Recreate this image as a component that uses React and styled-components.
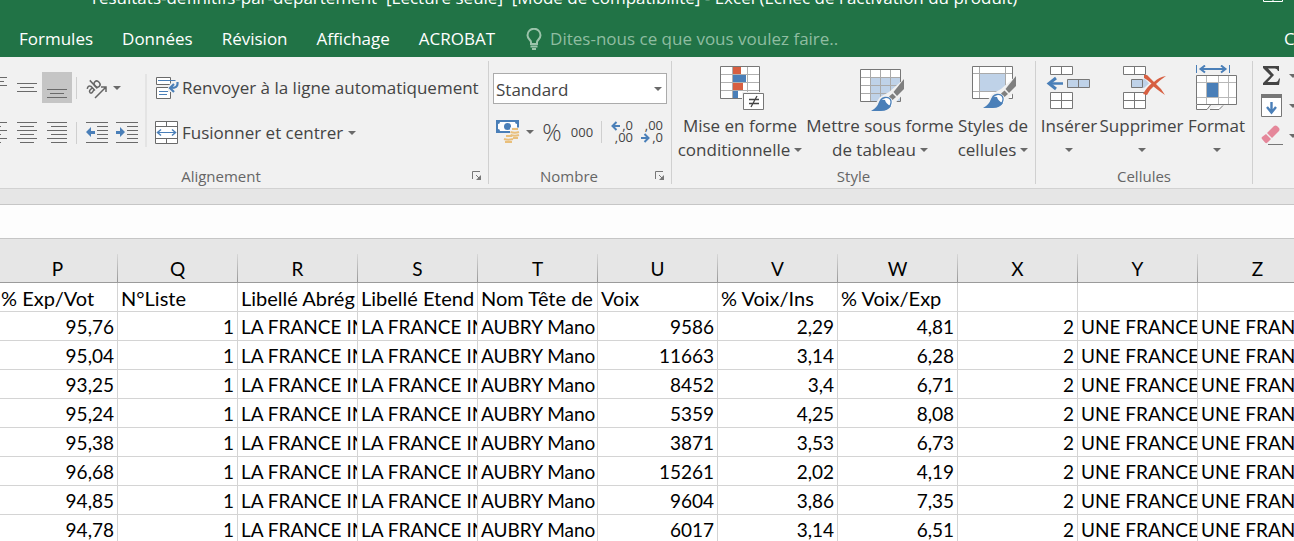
import React from "react";
import styled, { createGlobalStyle } from "styled-components";

const uiFont = '"Open Sans", "Noto Sans", sans-serif';
const ink = "#444";
const line = "#6a6a6a";
const blue = "#4a7fb8";
const paleBlue = "#bfd2e8";
const red = "#d75f41";

const GlobalStyle = createGlobalStyle`
  * { box-sizing: border-box; }
  body { margin: 0; background: #fff; font-family: ${uiFont}; overflow: hidden; }
  button, input, select { font: inherit; color: inherit; margin: 0; }
  svg { display: block; flex: none; }
`;

const Page = styled.div`
  display: flex;
  flex-direction: column;
  overflow: hidden;
`;

const Header = styled.header`
  background: #217346;
  color: #fff;
`;

const TitleBar = styled.div`
  display: flex;
  justify-content: space-between;
  align-items: flex-end;
  height: 20px;
  margin-top: -12px;
  padding: 0 11px 0 92px;
`;

const Title = styled.h1`
  margin: 0;
  font-size: 17px;
  line-height: 20px;
  font-weight: 400;
  white-space: pre;
`;

const Tabs = styled.nav`
  display: flex;
  align-items: center;
  gap: 29px;
  height: 49px;
  padding: 13px 0 0 19px;
`;

const Tab = styled.a`
  color: #fff;
  font-size: 17px;
  line-height: 24px;
  text-decoration: none;
  white-space: nowrap;
`;

const AccountTab = styled(Tab)`
  flex: 0 0 10px;
  overflow: hidden;
`;

const TellMe = styled.label`
  display: flex;
  align-items: center;
  gap: 8px;
  flex: 1;
  padding-left: 2px;
  color: #9cc4ab;
`;

const TellMeInput = styled.input`
  flex: 1;
  min-width: 0;
  padding: 0;
  border: 0;
  outline: 0;
  background: transparent;
  font-size: 17px;
  line-height: 24px;
  &::placeholder { color: #8fbda1; opacity: 1; }
`;

const Ribbon = styled.div`
  display: flex;
  padding: 4px 0;
  background: #f1f1f1;
  border-bottom: 1px solid #d2d2d2;
  color: ${ink};
`;

const Group = styled.section`
  display: flex;
  flex-direction: column;
  flex: none;
  width: ${(p) => p.$width}px;
  margin-left: ${(p) => p.$cut || 0}px;
  border-right: 1px solid #d0d0d0;
`;

const GroupBody = styled.div`
  display: flex;
  height: 107px;
  padding: ${(p) => p.$pad};
`;

const GroupFooter = styled.div`
  display: flex;
  align-items: center;
  height: 16px;
`;

const GroupName = styled.h2`
  flex: 1;
  margin: 0;
  text-align: center;
  font-size: 15px;
  line-height: 16px;
  font-weight: 400;
  color: #666;
`;

const Stack = styled.div`
  display: flex;
  flex-direction: column;
  gap: ${(p) => p.$gap || 0}px;
`;

const Row = styled.div`
  display: flex;
  align-items: center;
  height: ${(p) => p.$height || 31}px;
`;

const ToolButton = styled.button`
  display: flex;
  align-items: center;
  justify-content: center;
  gap: 6px;
  flex: none;
  width: ${(p) => p.$width || 30}px;
  height: 100%;
  padding: 0;
  border: 0;
  background: ${(p) => (p.$active ? "#c5c5c5" : "transparent")};
  font-size: ${(p) => p.$size || 17}px;
  font-weight: ${(p) => (p.$light ? 300 : 400)};
  line-height: 24px;
`;

const WideButton = styled(ToolButton)`
  justify-content: flex-start;
  gap: 3px;
  width: auto;
  white-space: nowrap;
`;

const LaunchButton = styled(ToolButton)`
  width: 22px;
`;

const Divider = styled.span`
  flex: none;
  width: 1px;
  height: 22px;
  margin: 0 5px 0 4px;
  background: #cfcfcf;
`;

const TallDivider = styled.span`
  flex: none;
  width: 2px;
  height: 73px;
  margin: 2px 8px 0 3px;
  background: #e4e4e4;
`;

const MenuMark = styled.span`
  display: flex;
  margin-left: ${(p) => p.$gap || 0}px;
`;

const FormatBox = styled.div`
  display: grid;
  align-items: center;
  width: 174px;
  height: 31px;
  border: 1px solid #ababab;
  background: #fff;
  & > * { grid-area: 1 / 1; }
  & > svg { justify-self: end; margin-right: 4px; pointer-events: none; }
`;

const FormatSelect = styled.select`
  appearance: none;
  width: 100%;
  height: 100%;
  padding: 1px 20px 0 2px;
  border: 0;
  background: transparent;
  font-size: 17px;
`;

const BigButton = styled.button`
  display: flex;
  flex-direction: column;
  align-items: center;
  flex: none;
  width: ${(p) => p.$width}px;
  padding: 0;
  border: 0;
  background: transparent;
  font-size: 17px;
  line-height: 24px;
  white-space: nowrap;
  & > svg { margin-bottom: 1px; }
`;

const BigLine = styled.span`
  display: flex;
  align-items: center;
  justify-content: center;
  gap: 4px;
  height: 24px;
`;

const FormulaArea = styled.div`
  padding-top: 15px;
  background: #e6e6e6;
`;

const FormulaInput = styled.input`
  display: block;
  width: 100%;
  height: 35px;
  padding: 0 8px;
  border: solid #c6c6c6;
  border-width: 1px 0;
  background: #fdfdfd;
  outline: 0;
`;

const Sheet = styled.table`
  width: 1320px;
  margin-left: -2px;
  table-layout: fixed;
  border-collapse: separate;
  border-spacing: 0;
  font-family: Lato, Carlito, sans-serif;
  font-size: 19px;
  color: #000;
`;

const ColumnHead = styled.th`
  height: 44px;
  padding: 16px 1px 0 0;
  border-bottom: 1px solid #9b9b9b;
  background: linear-gradient(#d8d8d8, #979797) right bottom / 1px 28px no-repeat #e6e6e6;
  font-weight: 400;
  line-height: 27px;
`;

const Cell = styled.td`
  height: 29px;
  padding: 2px 3px 0;
  border: solid #d4d4d4;
  border-width: 0 1px 1px 0;
  line-height: 26px;
  text-align: ${(p) => (p.$number ? "right" : "left")};
  white-space: nowrap;
  overflow: hidden;
`;

const HeadingCell = styled(Cell)`
  font-size: 20px;
`;

const Arrow = () => (
  <svg width="8" height="4" viewBox="0 0 8 4" aria-hidden="true">
    <path d="M0 0H8L4 4Z" fill="#6a6a6a" />
  </svg>
);

/* Horizontal text lines: [x, y, length] on a 22px square. */
const Lines = ({ rows, children }) => (
  <svg width="22" height="22" viewBox="0 0 22 22" shapeRendering="crispEdges" aria-hidden="true">
    {rows.map(([x, y, w]) => (
      <rect key={y} x={x} y={y} width={w} height="1" fill={line} />
    ))}
    {children}
  </svg>
);

const vertical = (y) => [[1, y, 20], [4, y + 4, 14], [1, y + 8, 20]];
const six = (x, w) => [0, 4, 8, 12, 16, 20].map((y, i) => (i % 2 ? [x, y, w] : [1, y, 20]));
const indent = [[0, 0, 22], [11, 4, 11], [11, 8, 11], [11, 12, 11], [11, 16, 11], [0, 20, 22]];

const BulbIcon = () => (
  <svg width="16" height="23" viewBox="0 0 16 23" fill="none" stroke="currentColor" aria-hidden="true">
    <path d="M5 16V14C5 12 1.500 11 1.500 7.200A6.300 6.300 0 0 1 14.500 7.200C14.500 11 11 12 11 14V16Z" strokeWidth="2" />
    <path d="M4.500 18.500H11.500M6 21H10" strokeWidth="2" />
  </svg>
);

const WindowIcon = () => (
  <svg width="20" height="14" viewBox="0 0 20 14" fill="none" stroke="#fff" aria-hidden="true">
    <path d="M.5.5H19.500V7.500H.5ZM10 1V7" />
  </svg>
);

const OrientationIcon = () => (
  <svg width="22" height="22" viewBox="0 0 22 22" fill="none" stroke="#666" strokeWidth="1.500" aria-hidden="true">
    <g transform="translate(8 10) rotate(-43)">
      <path d="M-5.500-2.500Q-2.500-5-1-1.800V4M-1 .3Q-6-.5-6 2Q-5.500 4.500-1 2.500" />
      <path d="M2.200-7V4" />
      <ellipse cx="5" cy=".6" rx="2.700" ry="3.200" />
    </g>
    <path d="M10 21L20.500 10.500M16 10H21V15" />
  </svg>
);

const WrapIcon = () => (
  <svg width="24" height="24" viewBox="0 0 24 24" fill="none" aria-hidden="true">
    <path d="M1.500 1.500H15.500V8.500H1.500ZM1.500 11.500H15.500V22.500H1.500Z" fill="#fff" stroke={line} />
    <path d="M16.500 6H24V16H13V11Z" fill="#f1f1f1" />
    <path d="M3 4.500H20.500M4 15.500H13M4 18.500H12" stroke={blue} />
    <path d="M22.500 6V8Q22.500 12 16 12M19 8L15 12L19 16" stroke={blue} strokeWidth="2.200" />
  </svg>
);

const MergeIcon = () => (
  <svg width="24" height="24" viewBox="0 0 24 24" fill="none" aria-hidden="true">
    <path d="M.5.5H22.500V22.500H.5Z" fill="#fff" stroke={line} />
    <path d="M0 5.500H23M0 17.500H23M11.500 0V5M11.500 18V23" stroke={line} />
    <path d="M3 11.500H20" stroke={blue} />
    <path d="M6 8.500L2.500 11.500L6 14.500M17 8.500L20.500 11.500L17 14.500" stroke={blue} strokeWidth="1.500" />
  </svg>
);

const MoneyIcon = () => (
  <svg width="24" height="24" viewBox="0 0 24 24" aria-hidden="true">
    <path d="M0 0H23V13H0Z" fill={blue} />
    <path d="M4 2H19Q19 4 21 4V9Q19 9 19 11H4Q4 9 2 9V4Q4 4 4 2Z" fill="#fff" />
    <circle cx="11.500" cy="6.500" r="3.500" fill={blue} />
    <path d="M14 7.500H24V19H18V23H7V14.500H14Z" fill="#f1f1f1" />
    <g fill="none" stroke="#e9bf7b" strokeWidth="2">
      <path d="M16 9H22M14.500 12Q19 13.500 23 12M14.500 15Q19 16.500 23 15M17 18H22" />
      <path d="M10 16H16M8 19Q12 20.500 17 19M9 22H16" />
    </g>
  </svg>
);

const DecimalArt = styled.svg`
  font-family: ${uiFont};
  font-size: 13px;
  fill: ${ink};
`;

const MoreDecimals = () => (
  <DecimalArt width="24" height="26" viewBox="0 0 24 26" aria-hidden="true">
    <path d="M10 7H3M6.500 3L2.500 7L6.500 11" fill="none" stroke={blue} strokeWidth="2" />
    <text x="23" y="11" textAnchor="end">,0</text>
    <text x="23" y="23" textAnchor="end">,00</text>
  </DecimalArt>
);

const FewerDecimals = () => (
  <DecimalArt width="24" height="26" viewBox="0 0 24 26" aria-hidden="true">
    <path d="M1 19H8M4.500 15L8.500 19L4.500 23" fill="none" stroke={blue} strokeWidth="2" />
    <text x="23" y="11" textAnchor="end">,00</text>
    <text x="23" y="23" textAnchor="end">,0</text>
  </DecimalArt>
);

const LaunchIcon = () => (
  <svg width="10" height="10" viewBox="0 0 10 10" fill="none" stroke="#777" aria-hidden="true">
    <path d="M.5 8V.5H8" />
    <path d="M4 4L8 8" />
    <path d="M9 4V9H4Z" fill="#777" stroke="none" />
  </svg>
);

const BigArt = ({ children }) => (
  <svg width="48" height="48" viewBox="0 0 48 48" fill="none" aria-hidden="true">{children}</svg>
);

const ConditionalIcon = () => (
  <BigArt>
    <path d="M4.500 1.500H43.500V33.500H4.500Z" fill="#fff" />
    <path d="M17 2H25V9H17ZM17 18H27V25H17Z" fill={red} />
    <path d="M17 10H30V17H17ZM17 26H22V33H17Z" fill={blue} />
    <path d="M5 9.500H43M5 17.500H43M5 25.500H43M16.500 2V33M31.500 2V33" stroke="#b0b0b0" />
    <path d="M4.500 1.500H43.500V33.500H4.500Z" stroke="#777" />
    <path d="M26 27H48V46H26Z" fill="#f1f1f1" />
    <path d="M27.500 28.500H47.500V44.500H27.500Z" fill="#fff" stroke="#777" />
    <path d="M33 34.500H43M33 38.500H43M41 31L35 42" stroke="#444" strokeWidth="1.300" />
  </BigArt>
);

const Brush = ({ x, y }) => (
  <g transform={`translate(${x} ${y})`}>
    <path d="M34-1L18 13L9 18L-2 34L20 33L26 22L34 13Z" fill="#f1f1f1" />
    <path d="M33 0V10L26 17L22.500 13Z" fill="#7f7f7f" />
    <path d="M21.500 14.500L25 18L21.500 21L18 17.500Z" fill="#7f7f7f" />
    <circle cx="15.500" cy="23.500" r="6" fill="#fff" />
    <path d="M0 32Q6 29 8 23Q10 20 14 21Q15 25 20 27Q17 32 10 32Z" fill={blue} />
    <path d="M8.500 25Q9 19.500 14 18.500Q19 18 20 22Q20.500 26 17 29" stroke={blue} strokeWidth="1.300" />
  </g>
);

const TableIcon = () => (
  <BigArt>
    <path d="M4.500 4.500H44.500V36.500H4.500Z" fill="#fff" />
    <path d="M15 13H44V36H15Z" fill={paleBlue} />
    <path d="M14.500 5V36M24.500 5V36M34.500 5V36M5 12.500H44M5 20.500H44M5 28.500H44" stroke="#aaa" />
    <path d="M4.500 4.500H44.500V36.500H4.500Z" stroke="#777" />
    <Brush x={15} y={14} />
  </BigArt>
);

const StylesIcon = () => (
  <BigArt>
    <path d="M3.500 1.500H43.500V33.500H3.500Z" fill="#fff" />
    <path d="M11 9H36V26H11Z" fill={paleBlue} />
    <path d="M10.500 2V33M36.500 2V33M4 8.500H43M4 26.500H43" stroke="#aaa" />
    <path d="M3.500 1.500H43.500V33.500H3.500Z" stroke="#777" />
    <Brush x={14} y={11} />
  </BigArt>
);

const InsertIcon = () => (
  <BigArt>
    <path d="M5.500 1.500H27.500V9.500H5.500ZM16.500 2V9M5.500 27.500H27.500V43.500H5.500ZM16.500 28V43M6 35.500H27" fill="#fff" stroke="#777" />
    <path d="M22.500 14.500H44.500V22.500H22.500ZM33.500 15V22" fill={paleBlue} stroke="#777" />
    <path d="M18 18.500H4" stroke={blue} strokeWidth="2.500" />
    <path d="M11 13L4 18.500L11 24" stroke={blue} strokeWidth="3" />
  </BigArt>
);

const DeleteIcon = () => (
  <BigArt>
    <path d="M5.500 1.500H27.500V9.500H5.500ZM16.500 2V9M5.500 27.500H27.500V43.500H5.500ZM16.500 28V43M6 35.500H27" fill="#fff" stroke="#777" />
    <path d="M13.500 14.500H24.500V22.500H13.500Z" fill={paleBlue} stroke="#777" />
    <path d="M25 14H27L31 18.500L26 23H25Z" fill={paleBlue} />
    <path d="M26 10Q29 9 31 12L36 17Q41 12 48 11Q42 15 38 19Q43 23 47 30Q41 26 35.500 21.500Q31 25 29 30L25 29Q29 22 33.500 18.500Q30 15 26 13Z" fill={red} />
  </BigArt>
);

const FormatIcon = () => (
  <BigArt>
    <path d="M3.500 0V8M36.500 0V8" stroke={blue} />
    <path d="M8 4H32M12 .5L7.500 4L12 7.500M28 .5L32.500 4L28 7.500" stroke={blue} strokeWidth="2" />
    <path d="M3.500 10.500H43.500V39.500H3.500Z" fill="#fff" />
    <path d="M13.500 11V39M25.500 11V39M35.500 11V39M4 17.500H43M4 32.500H43" stroke="#b8b8b8" />
    <path d="M14 18H25V32H14Z" fill={blue} />
    <path d="M3.500 10.500H43.500V39.500H3.500Z" stroke="#777" />
    <path d="M3.500 40V44.500H14L17.500 40M17 44.500H26L30 40.500" fill="#fff" stroke="#777" />
  </BigArt>
);

const SumIcon = () => (
  <svg width="22" height="22" viewBox="0 0 22 22" aria-hidden="true">
    <path d="M2 1H18V6H17Q16.500 3.500 14 3.500H7L13 10L6.500 17H15Q17 17 18 13.500H19L18 20H2V18L9.500 10.500L2 3Z" fill="#444" />
  </svg>
);

const FillIcon = () => (
  <svg width="22" height="24" viewBox="0 0 22 24" fill="none" aria-hidden="true">
    <path d="M.5 .5H20.500V22.500H.5Z" fill="#fff" stroke="#777" />
    <path d="M0 0H21V4H0Z" fill="#777" />
    <path d="M10.500 8V18M6 13L10.500 18.500L15 13" stroke={blue} strokeWidth="2.400" />
  </svg>
);

const EraserIcon = () => (
  <svg width="22" height="22" viewBox="0 0 22 22" aria-hidden="true">
    <path d="M6 8L13 1Q14.500 0 16 1L18 3Q19 4.500 18 6L11 13Z" fill="#e5879a" />
    <path d="M5 9L10 14L7 17Q5.500 19 4 17.500L1 14Q0 13 1 12Z" fill="#e5879a" />
    <path d="M7 19H22V20H7Z" fill="#777" />
  </svg>
);

const Launcher = ({ label }) => (
  <LaunchButton aria-label={label}><LaunchIcon /></LaunchButton>
);

const Big = ({ width, icon, first, second }) => (
  <BigButton $width={width}>
    {icon}
    <BigLine>{first}</BigLine>
    <BigLine>{second}<Arrow /></BigLine>
  </BigButton>
);

const tabs = ["Formules", "Données", "Révision", "Affichage", "ACROBAT"];
const letters = ["P", "Q", "R", "S", "T", "U", "V", "W", "X", "Y", "Z"];
const headings = ["% Exp/Vot", "N°Liste", "Libellé Abrég", "Libellé Etend", "Nom Tête de", "Voix", "% Voix/Ins", "% Voix/Exp", "", "", ""];
const results = [
  ["95,76", "9586", "2,29", "4,81"],
  ["95,04", "11663", "3,14", "6,28"],
  ["93,25", "8452", "3,4", "6,71"],
  ["95,24", "5359", "4,25", "8,08"],
  ["95,38", "3871", "3,53", "6,73"],
  ["96,68", "15261", "2,02", "4,19"],
  ["94,85", "9604", "3,86", "7,35"],
  ["94,78", "6017", "3,14", "6,51"],
];
const toCells = ([cast, votes, registered, share]) => [
  cast, "1", "LA FRANCE IN", "LA FRANCE IN", "AUBRY Mano",
  votes, registered, share, "2", "UNE FRANCE", "UNE FRANCE",
];
const isNumber = (text) => /^[\d,]+$/.test(text);

export default function App() {
  return (
    <Page>
      <GlobalStyle />
      <Header>
        <TitleBar>
          <Title>{"resultats-definitifs-par-departement  [Lecture seule]  [Mode de compatibilité] - Excel (Échec de l'activation du produit)"}</Title>
          <WindowIcon />
        </TitleBar>
        <Tabs>
          {tabs.map((t) => <Tab href="#" key={t}>{t}</Tab>)}
          <TellMe>
            <BulbIcon />
            <TellMeInput aria-label="Recherche" placeholder="Dites-nous ce que vous voulez faire.." />
          </TellMe>
          <AccountTab href="#">Connexion</AccountTab>
        </Tabs>
      </Header>

      <Ribbon>
        <Group $width={513} $cut={-24}>
          <GroupBody $pad="11px 0 0 6px">
            <Stack $gap={14}>
              <Row>
                <ToolButton aria-label="Aligner en haut"><Lines rows={vertical(0)} /></ToolButton>
                <ToolButton aria-label="Aligner au centre"><Lines rows={vertical(6)} /></ToolButton>
                <ToolButton $active aria-label="Aligner en bas"><Lines rows={vertical(12)} /></ToolButton>
                <Divider />
                <ToolButton $width={42} aria-label="Orientation"><OrientationIcon /><Arrow /></ToolButton>
              </Row>
              <Row>
                <ToolButton aria-label="Aligner à gauche"><Lines rows={six(1, 14)} /></ToolButton>
                <ToolButton aria-label="Centrer"><Lines rows={six(4, 14)} /></ToolButton>
                <ToolButton aria-label="Aligner à droite"><Lines rows={six(5, 16)} /></ToolButton>
                <Divider />
                <ToolButton aria-label="Diminuer le retrait">
                  <Lines rows={indent}><path d="M0 10L5 5V9H9V12H5V15Z" fill={blue} shapeRendering="auto" /></Lines>
                </ToolButton>
                <ToolButton aria-label="Augmenter le retrait">
                  <Lines rows={indent}><path d="M9 10L4 5V9H0V12H4V15Z" fill={blue} shapeRendering="auto" /></Lines>
                </ToolButton>
              </Row>
            </Stack>
            <TallDivider />
            <Stack $gap={14}>
              <Row><WideButton><WrapIcon />Renvoyer à la ligne automatiquement</WideButton></Row>
              <Row><WideButton><MergeIcon />Fusionner et centrer<MenuMark $gap={2}><Arrow /></MenuMark></WideButton></Row>
            </Stack>
          </GroupBody>
          <GroupFooter><GroupName>Alignement</GroupName><Launcher label="Options d'alignement" /></GroupFooter>
        </Group>

        <Group $width={183}>
          <GroupBody $pad="12px 4px 0">
            <Stack $gap={12}>
              <FormatBox>
                <FormatSelect aria-label="Format de nombre"><option>Standard</option></FormatSelect>
                <Arrow />
              </FormatBox>
              <Row>
                <ToolButton $width={44} aria-label="Format comptabilité"><MoneyIcon /><Arrow /></ToolButton>
                <ToolButton $size={24} $light aria-label="Pourcentage">%</ToolButton>
                <ToolButton $size={13} aria-label="Milliers">000</ToolButton>
                <Divider />
                <ToolButton aria-label="Ajouter une décimale"><MoreDecimals /></ToolButton>
                <ToolButton aria-label="Réduire les décimales"><FewerDecimals /></ToolButton>
              </Row>
            </Stack>
          </GroupBody>
          <GroupFooter><GroupName>Nombre</GroupName><Launcher label="Options de nombre" /></GroupFooter>
        </Group>

        <Group $width={364}>
          <GroupBody $pad="4px 4px 0">
            <Big width={128} icon={<ConditionalIcon />} first="Mise en forme" second="conditionnelle" />
            <Big width={152} icon={<TableIcon />} first="Mettre sous forme" second="de tableau" />
            <Big width={74} icon={<StylesIcon />} first="Styles de" second="cellules" />
          </GroupBody>
          <GroupFooter><GroupName>Style</GroupName></GroupFooter>
        </Group>

        <Group $width={217}>
          <GroupBody $pad="4px 4px 0">
            <Big width={58} icon={<InsertIcon />} first="Insérer" />
            <Big width={87} icon={<DeleteIcon />} first="Supprimer" />
            <Big width={63} icon={<FormatIcon />} first="Format" />
          </GroupBody>
          <GroupFooter><GroupName>Cellules</GroupName></GroupFooter>
        </Group>

        <Group $width={120}>
          <GroupBody $pad="0 7px">
            <Stack>
              <Row $height={30}><ToolButton $width={38} aria-label="Somme automatique"><SumIcon /><Arrow /></ToolButton></Row>
              <Row $height={30}><ToolButton $width={38} aria-label="Remplissage"><FillIcon /><Arrow /></ToolButton></Row>
              <Row $height={30}><ToolButton $width={38} aria-label="Effacer"><EraserIcon /><Arrow /></ToolButton></Row>
            </Stack>
          </GroupBody>
        </Group>
      </Ribbon>

      <FormulaArea><FormulaInput aria-label="Barre de formule" /></FormulaArea>

      <Sheet>
        <thead>
          <tr>{letters.map((l) => <ColumnHead key={l} scope="col">{l}</ColumnHead>)}</tr>
        </thead>
        <tbody>
          <tr>{headings.map((h, i) => <HeadingCell key={i}>{h}</HeadingCell>)}</tr>
          {results.map((r) => (
            <tr key={r[0]}>
              {toCells(r).map((c, i) => <Cell key={i} $number={isNumber(c)}>{c}</Cell>)}
            </tr>
          ))}
        </tbody>
      </Sheet>
    </Page>
  );
}
